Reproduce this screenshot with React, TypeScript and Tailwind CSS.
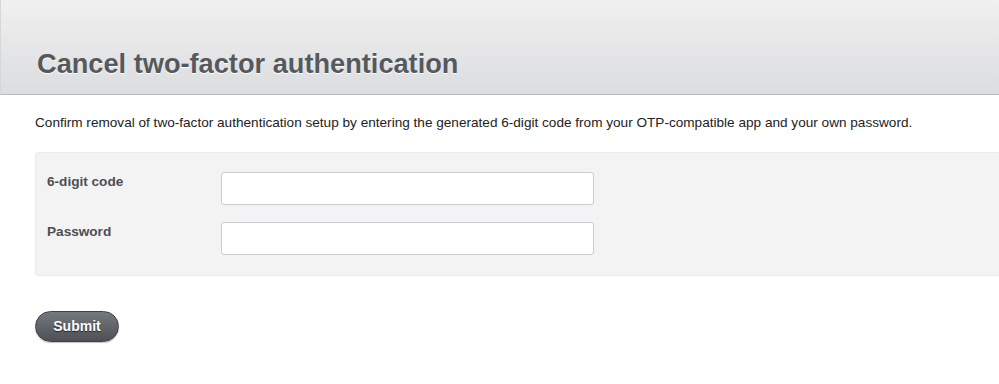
export default function App() {
  return (
    <div className="min-h-screen bg-white font-['Liberation_Sans',Arial,sans-serif]">
      {/* Header */}
      <header className="h-[95px] border-b border-l border-b-[#b9babc] border-l-[#d6d7d9] bg-[linear-gradient(#f0f0f0,#dcdddf)] flex items-end pl-[36px] pb-[17px]">
        <h1 className="text-[27.2px] font-bold leading-none text-[#55595d] [text-shadow:0_1px_0_#fff]">
          Cancel two-factor authentication
        </h1>
      </header>

      <main className="pl-[35px]">
        <p className="mt-[19px] text-[13.6px] leading-[18px] text-[#222]">
          Confirm removal of two-factor authentication setup by entering the generated 6-digit code from your
          OTP-compatible app and your own password.
        </p>

        {/* Form panel */}
        <div className="mt-[20px] h-[124px] rounded-l-[4px] border-t border-l border-b border-[#ebebeb] bg-[#f3f3f3] px-[11px] pt-[19px] flex flex-col gap-[17px]">
          <div className="flex items-start">
            <label className="w-[174px] pt-[1px] text-[13.6px] font-bold leading-[18px] text-[#4b4e52]">6-digit code</label>
            <input
              type="text"
              className="h-[33px] w-[373px] rounded-[3px] border border-[#c9ced3] bg-white outline-none"
            />
          </div>
          <div className="flex items-start">
            <label className="w-[174px] pt-[1px] text-[13.6px] font-bold leading-[18px] text-[#4b4e52]">Password</label>
            <input
              type="password"
              className="h-[33px] w-[373px] rounded-[3px] border border-[#c9ced3] bg-white outline-none"
            />
          </div>
        </div>

        <button className="mt-[35px] h-[31px] w-[84px] rounded-full border border-[#3e4145] bg-[linear-gradient(#75787c,#4d5054)] text-[14px] font-bold text-white [text-shadow:0_1px_1px_#222] shadow-[0_1px_1px_rgba(0,0,0,0.25)]">
          Submit
        </button>
      </main>
    </div>
  );
}
